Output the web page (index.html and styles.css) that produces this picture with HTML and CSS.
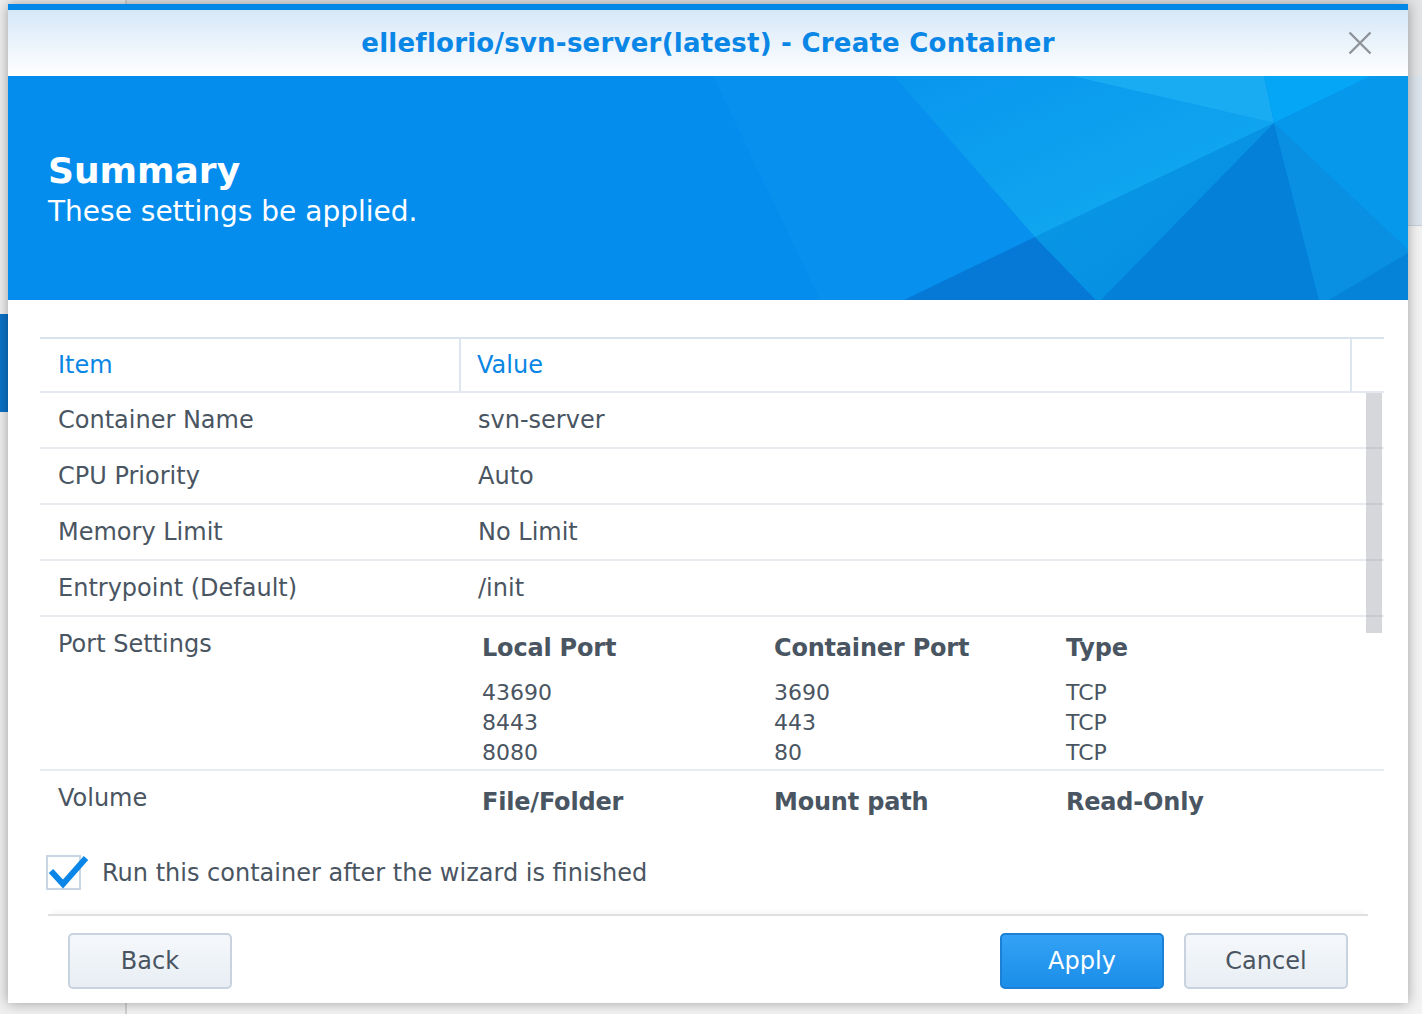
FILE: index.html
```html
<!DOCTYPE html>
<html lang="en">
<head>
<meta charset="utf-8">
<title>Create Container</title>
<link rel="stylesheet" href="styles.css">
</head>
<body>
<div class="app">
  <aside class="side">
    <div class="side-active"></div>
  </aside>
  <div class="main">
    <div class="main-top"></div>
    <div class="main-band"></div>
    <div class="main-rest"></div>
  </div>
</div>

<div class="dialog">
  <div class="titlebar">
    <span class="spacer"></span>
    <span class="title">elleflorio/svn-server(latest) - Create Container</span>
    <span class="close-wrap">
      <svg class="close" width="24" height="24" viewBox="0 0 24 24"><path d="M1.5 1.5 L22.5 22.5 M22.5 1.5 L1.5 22.5" stroke="#8e949a" stroke-width="2.4" fill="none"/></svg>
    </span>
  </div>

  <div class="banner">
    <svg class="shards" width="1400" height="224" viewBox="0 0 1400 224" preserveAspectRatio="none">
      <defs>
        <linearGradient id="g3" x1="0" y1="0" x2="1" y2="1">
          <stop offset="0" stop-color="#0996ee"/>
          <stop offset="1" stop-color="#12acef"/>
        </linearGradient>
        <linearGradient id="g8" x1="0" y1="0" x2="1" y2="1">
          <stop offset="0" stop-color="#0a9ae6"/>
          <stop offset="1" stop-color="#058be0"/>
        </linearGradient>
      </defs>
      <rect x="0" y="0" width="1400" height="224" fill="#058dee"/>
      <polygon points="705,0 886,0 1027,161 896,224 812,224" fill="#0790ee"/>
      <polygon points="886,0 1064,0 1266,47 1027,161" fill="url(#g3)"/>
      <polygon points="1064,0 1256,0 1266,47" fill="#1aacf3"/>
      <polygon points="1256,0 1363,0 1266,47" fill="#06a6f6"/>
      <polygon points="1363,0 1400,0 1400,174 1266,47" fill="#0598eb"/>
      <polygon points="896,224 1027,161 1088,224" fill="#0679d6"/>
      <polygon points="1027,161 1266,47 1093,224 1088,224" fill="url(#g8)"/>
      <polygon points="1093,224 1266,47 1311,224" fill="#0580d8"/>
      <polygon points="1266,47 1400,174 1400,177 1321,224 1311,224" fill="#0990e2"/>
      <polygon points="1321,224 1400,177 1400,224" fill="#0583d9"/>
    </svg>
    <div class="banner-text">
      <h1>Summary</h1>
      <p>These settings be applied.</p>
    </div>
  </div>

  <div class="content">
    <div class="table">
      <div class="thead">
        <div class="th">Item</div>
        <div class="th th-mid">Value</div>
        <div class="th"></div>
      </div>
      <div class="tbody">
        <div class="row"><div class="c1">Container Name</div><div class="c2">svn-server</div></div>
        <div class="row"><div class="c1">CPU Priority</div><div class="c2">Auto</div></div>
        <div class="row"><div class="c1">Memory Limit</div><div class="c2">No Limit</div></div>
        <div class="row"><div class="c1">Entrypoint (Default)</div><div class="c2">/init</div></div>
        <div class="row row-sub row-port">
          <div class="c1">Port Settings</div>
          <div class="c2">
            <div class="sub">
              <div class="sh">Local Port</div><div class="sh">Container Port</div><div class="sh">Type</div>
              <div class="sv">43690</div><div class="sv">3690</div><div class="sv">TCP</div>
              <div class="sv">8443</div><div class="sv">443</div><div class="sv">TCP</div>
              <div class="sv">8080</div><div class="sv">80</div><div class="sv">TCP</div>
            </div>
          </div>
        </div>
        <div class="row row-sub row-last">
          <div class="c1">Volume</div>
          <div class="c2">
            <div class="sub">
              <div class="sh">File/Folder</div><div class="sh">Mount path</div><div class="sh">Read-Only</div>
            </div>
          </div>
        </div>
        <div class="thumb"></div>
      </div>
    </div>

    <div class="check">
      <span class="box">
        <svg class="tick" width="44" height="36" viewBox="0 0 44 36"><path d="M5 17 L17 30 L40 4" stroke="#0a86e8" stroke-width="6" fill="none" stroke-linejoin="miter"/></svg>
      </span>
      <span class="check-label">Run this container after the wizard is finished</span>
    </div>
  </div>

  <div class="footer">
    <button class="btn">Back</button>
    <span class="grow"></span>
    <button class="btn btn-primary">Apply</button>
    <button class="btn">Cancel</button>
  </div>
</div>
</body>
</html>
```

FILE: styles.css
```css
* { box-sizing: border-box; }

html, body {
  margin: 0;
  padding: 0;
}

body {
  width: 1422px;
  height: 1014px;
  overflow: hidden;
  background: #f3f3f3;
  font-family: "DejaVu Sans", Verdana, sans-serif;
  color: #4a5562;
  position: relative;
}

/* background application behind the modal */
.app {
  display: grid;
  grid-template-columns: 127px 1fr;
  height: 1014px;
}

.side {
  background: #efefef;
  border-right: 2px solid #cfd1d3;
  padding-top: 314px;
}

.side-active {
  height: 98px;
  background: #0b72c8;
}

.main {
  display: flex;
  flex-direction: column;
}

.main-top {
  height: 76px;
  background: #e3e4e5;
}

.main-band {
  height: 150px;
  background: #dbe4ec;
  border-bottom: 1px solid #c9d1d8;
}

.main-rest {
  flex: 1;
  background: #f3f3f3;
}

/* modal window */
.dialog {
  position: absolute;
  left: 8px;
  top: 4px;
  width: 1400px;
  height: 999px;
  background: #ffffff;
  border-top: 6px solid #0088e8;
  box-shadow: 0 0 12px rgba(0, 0, 0, 0.35);
  display: flex;
  flex-direction: column;
}

.titlebar {
  height: 66px;
  display: grid;
  grid-template-columns: 1fr auto 1fr;
  align-items: center;
  background: linear-gradient(#d6e8f8, #ffffff);
}

.title {
  font-size: 26px;
  font-weight: bold;
  letter-spacing: 0.24px;
  color: #0a87e6;
  white-space: nowrap;
}

.close-wrap {
  justify-self: end;
  margin-right: 36px;
  display: flex;
}

.banner {
  height: 224px;
  position: relative;
  overflow: hidden;
  background: #058dee;
}

.shards {
  position: absolute;
  left: 0;
  top: 0;
  display: block;
}

.banner-text {
  position: relative;
  padding: 75px 0 0 40px;
  color: #ffffff;
}

.banner h1 {
  margin: 0;
  font-size: 36px;
  line-height: 40px;
  font-weight: bold;
}

.banner p {
  margin: 4px 0 0;
  font-size: 28px;
  line-height: 34px;
}

.content {
  padding: 37px 24px 0 32px;
}

.table {
  width: 1344px;
}

.thead {
  display: grid;
  grid-template-columns: 419px 893px 32px;
  border-top: 2px solid #d9e3ed;
  border-bottom: 2px solid #e3e9ef;
  height: 56px;
}

.th {
  font-size: 24px;
  color: #0a86e4;
  padding-left: 18px;
  display: flex;
  align-items: center;
}

.th-mid {
  border-left: 2px solid #dde6ef;
  border-right: 2px solid #dde6ef;
  padding-left: 16px;
}

.tbody {
  position: relative;
  height: 440px;
  overflow: hidden;
}

.row {
  display: grid;
  grid-template-columns: 419px 1fr;
  height: 56px;
  border-bottom: 2px solid #e8ecf0;
  font-size: 24px;
  line-height: 28px;
}

.row .c1 {
  padding-left: 18px;
  display: flex;
  align-items: center;
}

.row .c2 {
  padding-left: 19px;
  display: flex;
  align-items: center;
}

.row-sub {
  height: auto;
}

.row-sub .c1 {
  align-items: flex-start;
  padding-top: 13px;
}

.row-sub .c2 {
  display: block;
  padding-top: 17px;
  padding-left: 23px;
}

.row-port .c2 {
  padding-bottom: 1px;
}

.row-last {
  border-bottom: none;
  height: 120px;
}

.sub {
  display: grid;
  grid-template-columns: 292px 292px 1fr;
}

.sh {
  font-weight: bold;
  font-size: 24px;
  line-height: 28px;
  margin-bottom: 16px;
  letter-spacing: -0.2px;
}

.sv {
  font-size: 22px;
  line-height: 30px;
}

.thumb {
  position: absolute;
  top: 0;
  right: 2px;
  width: 16px;
  height: 240px;
  background: rgba(150, 154, 162, 0.4);
}

.check {
  display: flex;
  align-items: center;
  margin-top: 22px;
  margin-left: 6px;
  height: 35px;
}

.box {
  position: relative;
  width: 35px;
  height: 35px;
  border: 2px solid #c8d5e2;
  background: #ffffff;
  flex: none;
}

.tick {
  position: absolute;
  left: -2px;
  top: -3px;
  overflow: visible;
}

.check-label {
  margin-left: 21px;
  font-size: 24px;
}

.footer {
  margin: 24px 40px 0 40px;
  border-top: 2px solid #dedfe0;
  box-shadow: 0 -5px 6px -4px rgba(0, 0, 0, 0.05);
  padding: 17px 20px 0 20px;
  display: flex;
  gap: 20px;
}

.grow {
  flex: 1;
}

.btn {
  width: 164px;
  height: 56px;
  border: 2px solid #c8d3df;
  border-radius: 5px;
  background: linear-gradient(#f5f8fb, #e8eef4);
  font-family: "DejaVu Sans", Verdana, sans-serif;
  font-size: 24px;
  color: #4a5562;
  padding: 0;
}

.btn-primary {
  background: linear-gradient(#33a2f6, #1b8ee8);
  border-color: #1b80d6;
  color: #ffffff;
}
```
